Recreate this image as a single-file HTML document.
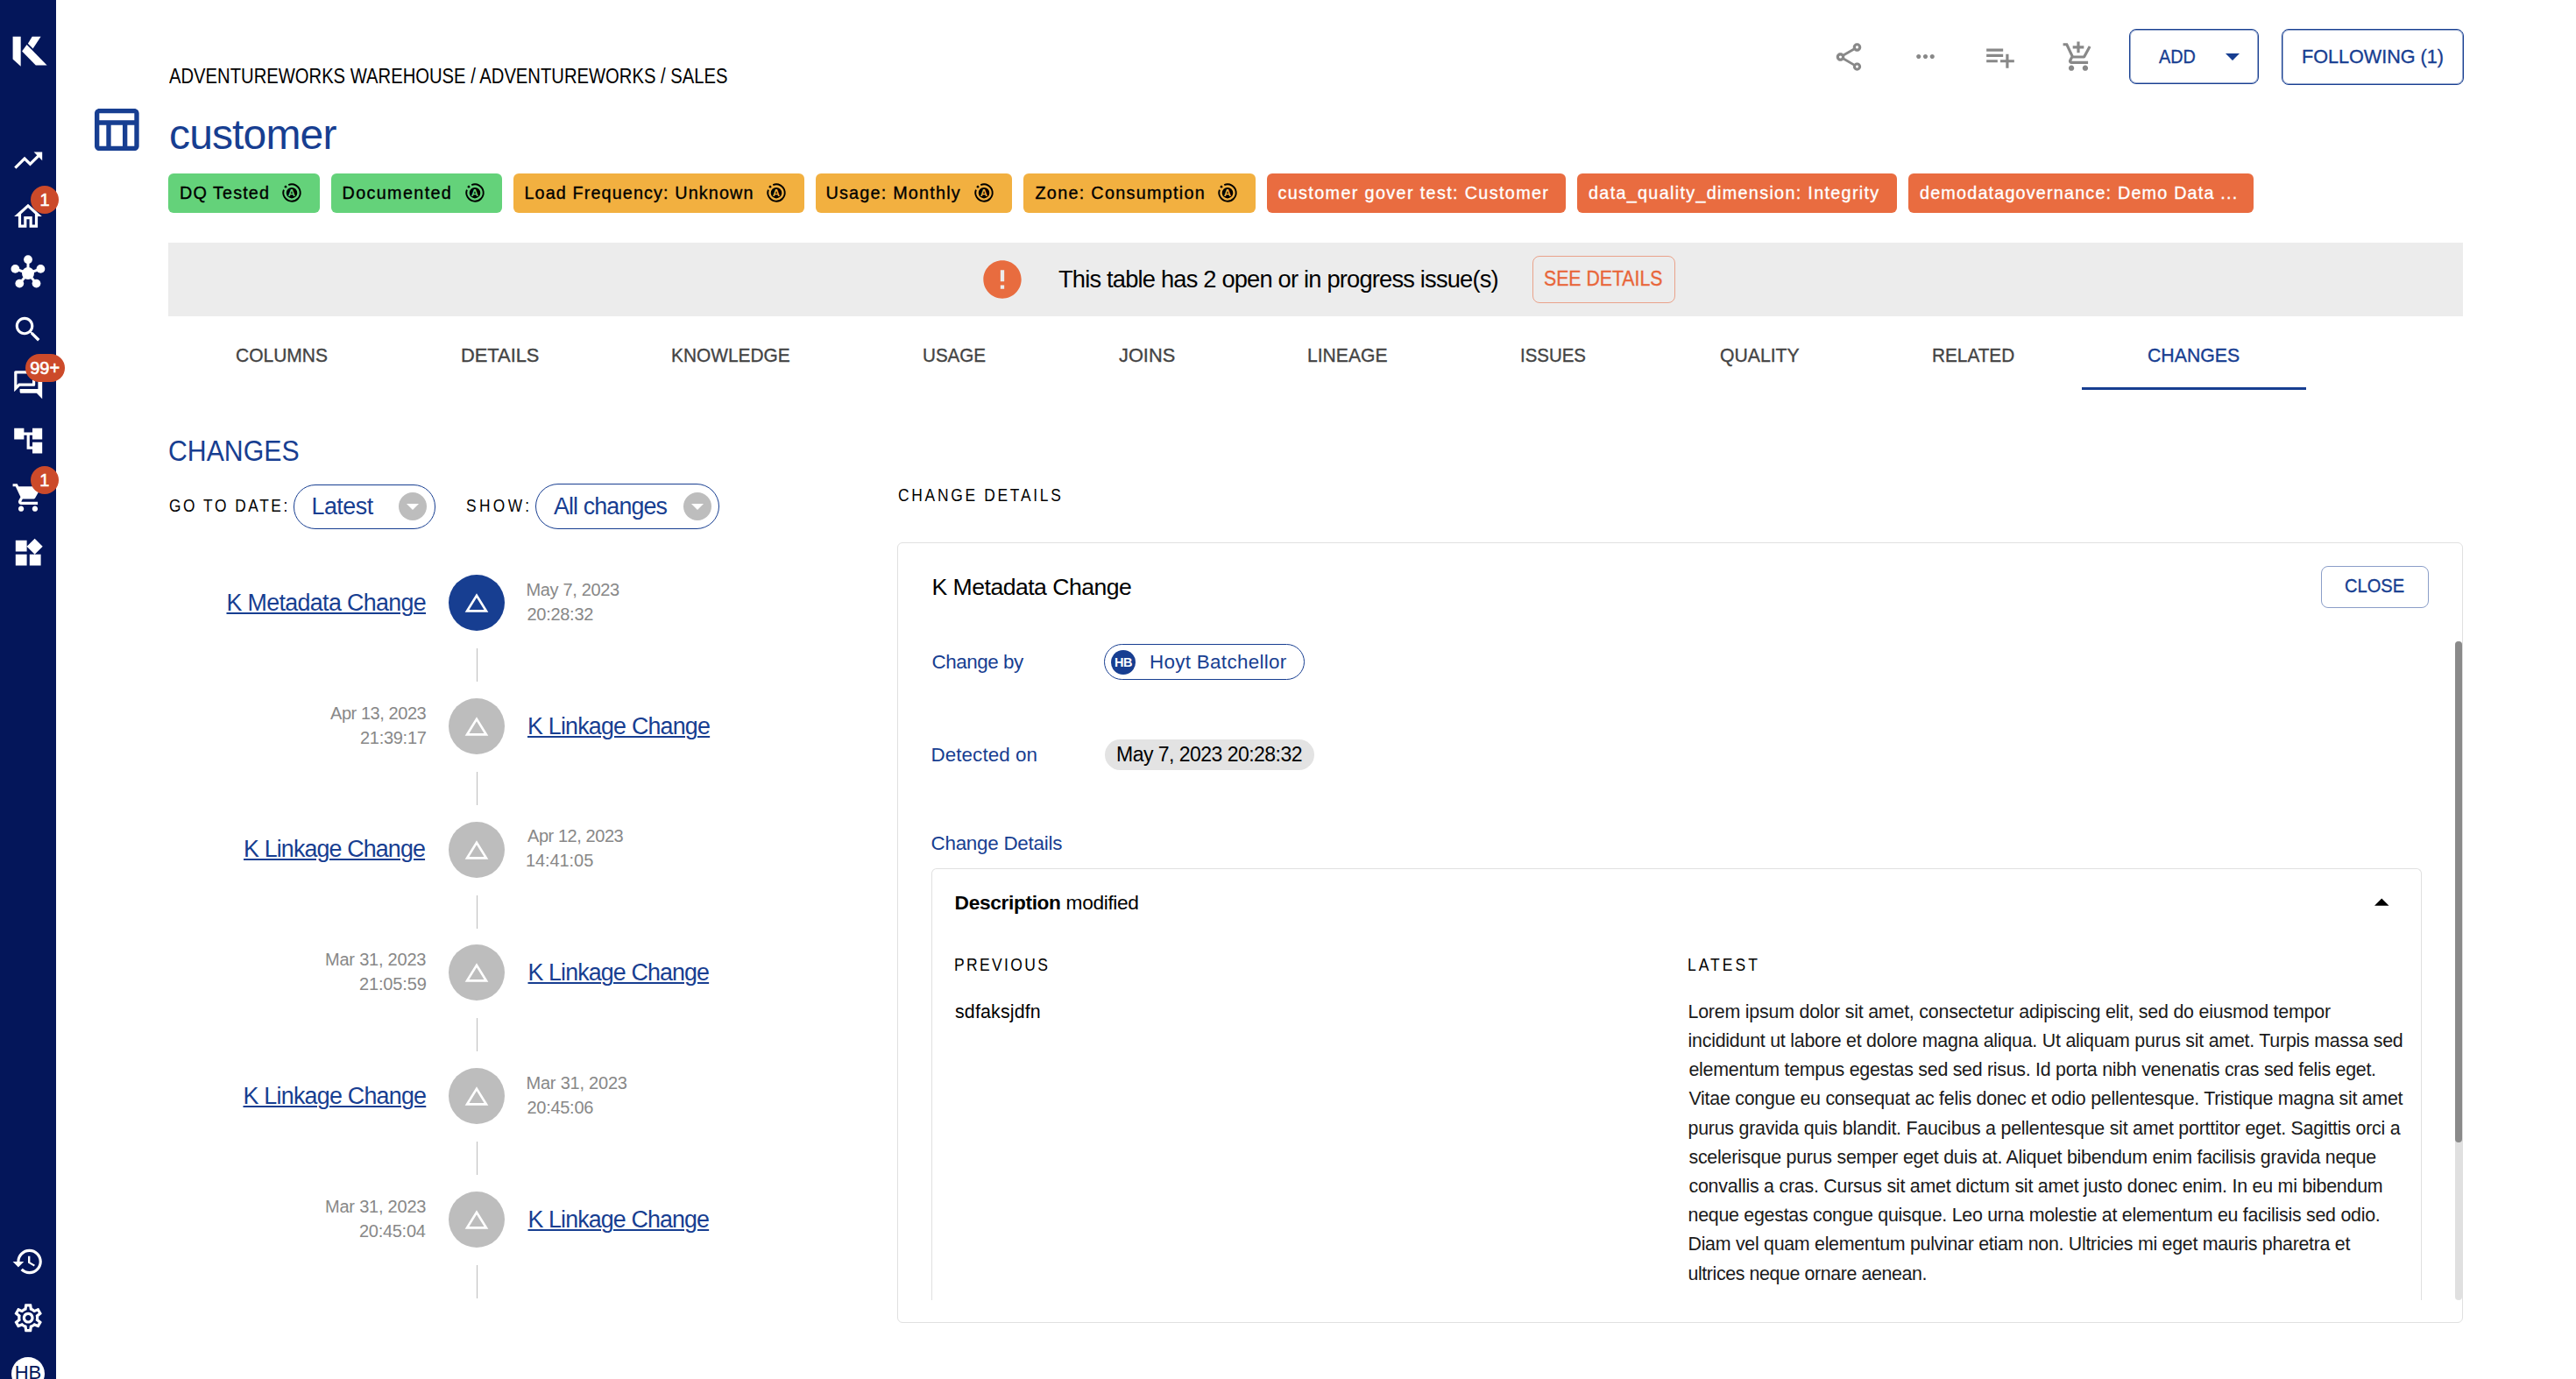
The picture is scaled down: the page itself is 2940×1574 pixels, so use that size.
<!DOCTYPE html>
<html><head><meta charset="utf-8"><title>customer</title>
<style>
html,body{margin:0;padding:0;width:2940px;height:1574px;overflow:hidden;background:#fff}
body{position:relative;font-family:"Liberation Sans",sans-serif}
.b,.t,.ic{position:absolute}
.t{white-space:nowrap}
</style></head><body>
<div class="b" style="left:0.00px;top:0.00px;width:64.00px;height:1574.00px;background:#04165a"></div>
<svg class="ic" style="left:0;top:0;width:64px;height:100px" viewBox="0 0 64 100"><g fill="#fff"><polygon points="14.6,41.8 23.7,41.8 23.7,75.7 14.6,67.6"/><polygon points="36.7,41.8 46.6,41.8 37.6,55.5 31.9,49.7"/><polygon points="30.6,51.1 53.6,74.5 40.8,74.5 25.1,58.5"/></g></svg>
<svg class="ic" style="left:13.10px;top:164.40px;width:38.40px;height:38.40px" viewBox="0 0 24 24"><path fill="#fff" d="M16 6l2.29 2.29-4.88 4.88-4-4L2 16.59 3.41 18l6-6 4 4 6.3-6.29L22 12V6z"/></svg>
<svg class="ic" style="left:13.30px;top:228.30px;width:38.00px;height:38.00px" viewBox="0 0 24 24"><path fill="#fff" d="M12 5.69l5 4.5V18h-2v-6H9v6H7v-7.81l5-4.5M12 3L2 12h3v8h6v-6h2v6h6v-8h3L12 3z"/></svg>
<svg class="ic" style="left:0;top:280px;width:64px;height:64px" viewBox="0 0 64 64"><g fill="#fff" stroke="#fff" stroke-width="3"><line x1="32" y1="32" x2="32" y2="16.2"/><line x1="32" y1="32" x2="17.4" y2="26.9"/><line x1="32" y1="32" x2="46.4" y2="26.9"/><line x1="32" y1="32" x2="22.3" y2="43.6"/><line x1="32" y1="32" x2="41.5" y2="43.6"/></g><g fill="#fff"><circle cx="32" cy="32" r="7"/><circle cx="32" cy="16.2" r="4.9"/><circle cx="17.4" cy="26.9" r="4.9"/><circle cx="46.4" cy="26.9" r="4.9"/><circle cx="22.3" cy="43.6" r="4.9"/><circle cx="41.5" cy="43.6" r="4.9"/></g></svg>
<svg class="ic" style="left:13.30px;top:356.80px;width:38.00px;height:38.00px" viewBox="0 0 24 24"><path fill="#fff" d="M15.5 14h-.79l-.28-.27C15.41 12.59 16 11.11 16 9.5 16 5.91 13.09 3 9.5 3S3 5.91 3 9.5 5.91 16 9.5 16c1.61 0 3.09-.59 4.23-1.57l.27.28v.79l5 4.99L20.49 19l-4.99-5zm-6 0C7.01 14 5 11.99 5 9.5S7.01 5 9.5 5 14 7.01 14 9.5 11.99 14 9.5 14z"/></svg>
<svg class="ic" style="left:12.50px;top:419.80px;width:38.40px;height:38.40px" viewBox="0 0 24 24"><path fill="#fff" d="M15 4v7H5.17l-.59.59-.58.58V4h11m1-2H3c-.55 0-1 .45-1 1v14l4-4h10c.55 0 1-.45 1-1V3c0-.55-.45-1-1-1zm5 4h-2v9H6v2c0 .55.45 1 1 1h11l4 4V7c0-.55-.45-1-1-1z"/></svg>
<svg class="ic" style="left:12.50px;top:483.80px;width:38.40px;height:38.40px" viewBox="0 0 24 24"><path fill="#fff" d="M22 11V3h-7v3H9V3H2v8h7V8h2v10h4v3h7v-8h-7v3h-2V8h2v3z"/></svg>
<svg class="ic" style="left:13.20px;top:548.80px;width:38.00px;height:38.00px" viewBox="0 0 24 24"><path fill="#fff" d="M7 18c-1.1 0-1.99.9-1.99 2S5.9 22 7 22s2-.9 2-2-.9-2-2-2zM1 2v2h2l3.6 7.59-1.35 2.45c-.16.28-.25.61-.25.96 0 1.1.9 2 2 2h12v-2H7.42c-.14 0-.25-.11-.25-.25l.03-.12.9-1.63h7.45c.75 0 1.41-.41 1.75-1.03l3.58-6.49c.08-.14.12-.31.12-.48 0-.55-.45-1-1-1H5.21l-.94-2H1zm16 16c-1.1 0-1.99.9-1.99 2s.89 2 1.99 2 2-.9 2-2-.9-2-2-2z"/></svg>
<svg class="ic" style="left:12.80px;top:612.30px;width:38.40px;height:38.40px" viewBox="0 0 24 24"><path fill="#fff" d="M13 13v8h8v-8h-8zM3 21h8v-8H3v8zM3 3v8h8V3H3zm13.66-1.31L11 7.34 16.66 13l5.66-5.66-5.66-5.65z"/></svg>
<svg class="ic" style="left:13.40px;top:1420.70px;width:38.00px;height:38.00px" viewBox="0 0 24 24"><path fill="#fff" d="M13 3c-4.97 0-9 4.03-9 9H1l3.89 3.89.07.14L9 12H6c0-3.87 3.13-7 7-7s7 3.13 7 7-3.13 7-7 7c-1.93 0-3.68-.79-4.94-2.06l-1.42 1.42C8.27 19.99 10.51 21 13 21c4.97 0 9-4.03 9-9s-4.03-9-9-9zm-1 5v5l4.28 2.54.72-1.21-3.5-2.08V8H12z"/></svg>
<svg class="ic" style="left:12.90px;top:1484.60px;width:38.40px;height:38.40px" viewBox="0 0 24 24"><path fill="#fff" d="M19.43 12.98c.04-.32.07-.64.07-.98 0-.34-.03-.66-.07-.98l2.11-1.65c.19-.15.24-.42.12-.64l-2-3.46c-.09-.16-.26-.25-.44-.25-.06 0-.12.01-.17.03l-2.49 1c-.52-.4-1.08-.73-1.69-.98l-.38-2.65C14.46 2.18 14.25 2 14 2h-4c-.25 0-.46.18-.49.42l-.38 2.65c-.61.25-1.17.59-1.69.98l-2.49-1c-.06-.02-.12-.03-.18-.03-.17 0-.34.09-.43.25l-2 3.46c-.13.22-.07.49.12.64l2.11 1.65c-.04.32-.07.65-.07.98 0 .33.03.66.07.98l-2.11 1.65c-.19.15-.24.42-.12.64l2 3.46c.09.16.26.25.44.25.06 0 .12-.01.17-.03l2.49-1c.52.4 1.08.73 1.69.98l.38 2.65c.03.24.24.42.49.42h4c.25 0 .46-.18.49-.42l.38-2.65c.61-.25 1.17-.59 1.69-.98l2.49 1c.06.02.12.03.18.03.17 0 .34-.09.43-.25l2-3.46c.12-.22.07-.49-.12-.64l-2.11-1.65zm-1.98-1.71c.04.31.05.52.05.73 0 .21-.02.43-.05.73l-.14 1.13.89.7 1.08.84-.7 1.21-1.27-.51-1.04-.42-.9.68c-.43.32-.84.56-1.25.73l-1.06.43-.16 1.13-.2 1.35h-1.4l-.19-1.35-.16-1.13-1.06-.43c-.43-.18-.83-.41-1.23-.71l-.91-.7-1.06.43-1.27.51-.7-1.21 1.08-.84.89-.7-.14-1.13c-.03-.31-.05-.54-.05-.74s.02-.43.05-.73l.14-1.13-.89-.7-1.08-.84.7-1.21 1.27.51 1.04.42.9-.68c.43-.32.84-.56 1.25-.73l1.06-.43.16-1.13.2-1.35h1.39l.19 1.35.16 1.13 1.06.43c.43.18.83.41 1.23.71l.91.7 1.06-.43 1.27-.51.7 1.21-1.07.85-.89.7.14 1.13zM12 8c-2.21 0-4 1.790-4 4s1.79 4 4 4 4-1.79 4-4-1.79-4-4-4zm0 6c-1.1 0-2-.9-2-2s.9-2 2-2 2 .9 2 2-.9 2-2 2z"/></svg>
<div class="b" style="left:13px;top:1548.5px;width:38px;height:38px;border-radius:50%;background:#fff"></div>
<div class="t" style="left:13px;top:1556px;width:38px;text-align:center;font-size:22px;line-height:22px;color:#04165a">HB</div>
<div class="b badge" style="left:35.00px;top:211.70px;width:32.00px;height:32px;border-radius:16px;background:#cc4a2a;color:#fff;font-size:20px;line-height:32px;text-align:center;-webkit-text-stroke:0.6px #fff">1</div>
<div class="b badge" style="left:28.60px;top:404.00px;width:45.20px;height:32px;border-radius:16px;background:#cc4a2a;color:#fff;font-size:20px;line-height:32px;text-align:center;-webkit-text-stroke:0.6px #fff">99+</div>
<div class="b badge" style="left:34.90px;top:531.90px;width:32.00px;height:32px;border-radius:16px;background:#cc4a2a;color:#fff;font-size:20px;line-height:32px;text-align:center;-webkit-text-stroke:0.6px #fff">1</div>
<svg class="ic" style="left:2091.20px;top:46.10px;width:38.00px;height:38.00px" viewBox="0 0 24 24"><path fill="#888" d="M18 16.08c-.76 0-1.44.3-1.96.77L8.91 12.7c.05-.23.09-.46.09-.7s-.04-.47-.09-.7l7.05-4.11c.54.5 1.25.81 2.04.81 1.66 0 3-1.34 3-3s-1.34-3-3-3-3 1.34-3 3c0 .24.04.47.09.7L8.04 9.81C7.5 9.31 6.79 9 6 9c-1.66 0-3 1.34-3 3s1.34 3 3 3c.79 0 1.5-.31 2.04-.81l7.12 4.16c-.05.21-.08.43-.08.65 0 1.61 1.31 2.92 2.92 2.92s2.92-1.31 2.92-2.92c0-1.61-1.31-2.92-2.92-2.92zM18 4c.55 0 1 .45 1 1s-.45 1-1 1-1-.45-1-1 .45-1 1-1zM6 13c-.55 0-1-.45-1-1s.45-1 1-1 1 .45 1 1-.45 1-1 1zm12 7.02c-.55 0-1-.45-1-1s.45-1 1-1 1 .45 1 1-.45 1-1 1z"/></svg>
<svg class="ic" style="left:2181.50px;top:48.50px;width:31.00px;height:31.00px" viewBox="0 0 24 24"><path fill="#888" d="M6 10c-1.1 0-2 .9-2 2s.9 2 2 2 2-.9 2-2-.9-2-2-2zm12 0c-1.1 0-2 .9-2 2s.9 2 2 2 2-.9 2-2-.9-2-2-2zm-6 0c-1.1 0-2 .9-2 2s.9 2 2 2 2-.9 2-2-.9-2-2-2z"/></svg>
<svg class="ic" style="left:2263.80px;top:46.00px;width:38.00px;height:38.00px" viewBox="0 0 24 24"><path fill="#888" d="M14 10H2v2h12v-2zm0-4H2v2h12V6zm4 8v-4h-2v4h-4v2h4v4h2v-4h4v-2h-4zM2 16h8v-2H2v2z"/></svg>
<svg class="ic" style="left:2353.40px;top:45.80px;width:38.00px;height:38.00px" viewBox="0 0 24 24"><path fill="#888" d="M11 9h2V6h3V4h-3V1h-2v3H8v2h3v3zm-4 9c-1.1 0-1.99.9-1.99 2S5.9 22 7 22s2-.9 2-2-.9-2-2-2zm10 0c-1.1 0-1.99.9-1.99 2s.89 2 1.99 2 2-.9 2-2-.9-2-2-2zm-9.83-3.25l.03-.12.9-1.63h7.45c.75 0 1.41-.41 1.75-1.03l3.86-7.01L19.42 4h-.01l-1.1 2-2.76 5H8.53l-.13-.27L6.16 6l-.95-2-.94-2H1v2h2l3.6 7.59-1.35 2.45c-.16.28-.25.61-.25.96 0 1.1.9 2 2 2h12v-2H7.42c-.13 0-.25-.11-.25-.25z"/></svg>
<div class="b" style="left:2430.00px;top:33.00px;width:148.00px;height:63.00px;border:1px solid #173e91;box-shadow:inset 0 0 0 1px rgba(23,62,145,0.45);border-radius:8px;box-sizing:border-box"></div>
<svg class="ic" style="left:2540px;top:60.8px;width:16px;height:8.1px" viewBox="0 0 10 5"><path fill="#173e91" d="M0 0l5 5 5-5z"/></svg>
<div class="b" style="left:2604.00px;top:33.00px;width:208.00px;height:63.50px;border:1px solid #173e91;box-shadow:inset 0 0 0 1px rgba(23,62,145,0.45);border-radius:8px;box-sizing:border-box"></div>
<svg class="ic" style="left:100.00px;top:116.00px;width:64.00px;height:64.00px" viewBox="0 0 24 24"><path fill="#173e91" d="M20 3H5c-1.1 0-2 .9-2 2v14c0 1.1.9 2 2 2h15c1.1 0 2-.9 2-2V5c0-1.1-.9-2-2-2zm0 2v3H5V5h15zm-5 14h-5v-9h5v9zM5 10h3v9H5v-9zm12 9v-9h3v9h-3z"/></svg>
<div class="b" style="left:192.00px;top:198.00px;width:173.00px;height:44.50px;background:#64d27a;border-radius:6px"></div>
<svg class="ic" style="left:321.30px;top:208.00px;width:24px;height:24px" viewBox="0 0 24 24"><path d="M8.26 3.05 A9.7 9.7 0 1 1 2.91 8.6" fill="none" stroke="#000" stroke-width="1.9"/><circle cx="5" cy="5.2" r="1.35" fill="#000"/><circle cx="12" cy="12.2" r="6.2" fill="#000"/><text x="12" y="16.3" text-anchor="middle" font-size="11.5" font-weight="700" fill="#64d27a" font-family="Liberation Sans">A</text></svg>
<div class="b" style="left:378.20px;top:198.00px;width:194.70px;height:44.50px;background:#64d27a;border-radius:6px"></div>
<svg class="ic" style="left:529.60px;top:208.00px;width:24px;height:24px" viewBox="0 0 24 24"><path d="M8.26 3.05 A9.7 9.7 0 1 1 2.91 8.6" fill="none" stroke="#000" stroke-width="1.9"/><circle cx="5" cy="5.2" r="1.35" fill="#000"/><circle cx="12" cy="12.2" r="6.2" fill="#000"/><text x="12" y="16.3" text-anchor="middle" font-size="11.5" font-weight="700" fill="#64d27a" font-family="Liberation Sans">A</text></svg>
<div class="b" style="left:586.20px;top:198.00px;width:331.70px;height:44.50px;background:#f2b040;border-radius:6px"></div>
<svg class="ic" style="left:873.70px;top:208.00px;width:24px;height:24px" viewBox="0 0 24 24"><path d="M8.26 3.05 A9.7 9.7 0 1 1 2.91 8.6" fill="none" stroke="#000" stroke-width="1.9"/><circle cx="5" cy="5.2" r="1.35" fill="#000"/><circle cx="12" cy="12.2" r="6.2" fill="#000"/><text x="12" y="16.3" text-anchor="middle" font-size="11.5" font-weight="700" fill="#f2b040" font-family="Liberation Sans">A</text></svg>
<div class="b" style="left:931.10px;top:198.00px;width:223.70px;height:44.50px;background:#f2b040;border-radius:6px"></div>
<svg class="ic" style="left:1111.30px;top:208.00px;width:24px;height:24px" viewBox="0 0 24 24"><path d="M8.26 3.05 A9.7 9.7 0 1 1 2.91 8.6" fill="none" stroke="#000" stroke-width="1.9"/><circle cx="5" cy="5.2" r="1.35" fill="#000"/><circle cx="12" cy="12.2" r="6.2" fill="#000"/><text x="12" y="16.3" text-anchor="middle" font-size="11.5" font-weight="700" fill="#f2b040" font-family="Liberation Sans">A</text></svg>
<div class="b" style="left:1168.10px;top:198.00px;width:264.70px;height:44.50px;background:#f2b040;border-radius:6px"></div>
<svg class="ic" style="left:1388.70px;top:208.00px;width:24px;height:24px" viewBox="0 0 24 24"><path d="M8.26 3.05 A9.7 9.7 0 1 1 2.91 8.6" fill="none" stroke="#000" stroke-width="1.9"/><circle cx="5" cy="5.2" r="1.35" fill="#000"/><circle cx="12" cy="12.2" r="6.2" fill="#000"/><text x="12" y="16.3" text-anchor="middle" font-size="11.5" font-weight="700" fill="#f2b040" font-family="Liberation Sans">A</text></svg>
<div class="b" style="left:1446.20px;top:198.00px;width:340.50px;height:44.50px;background:#e96c40;border-radius:6px"></div>
<div class="b" style="left:1800.00px;top:198.00px;width:364.80px;height:44.50px;background:#e96c40;border-radius:6px"></div>
<div class="b" style="left:2178.30px;top:198.00px;width:394.20px;height:44.50px;background:#e96c40;border-radius:6px"></div>
<div class="b" style="left:192.00px;top:277.00px;width:2618.50px;height:84.00px;background:#ececec"></div>
<svg class="ic" style="left:1117.50px;top:292.80px;width:52.00px;height:52.00px" viewBox="0 0 24 24"><path fill="#e86c3f" d="M12 2C6.48 2 2 6.48 2 12s4.48 10 10 10 10-4.48 10-10S17.52 2 12 2zm1 15h-2v-2h2v2zm0-4h-2V7h2v6z"/></svg>
<div class="b" style="left:1749.00px;top:292.00px;width:163.00px;height:54.00px;border:1.5px solid rgba(232,102,58,0.55);border-radius:8px;box-sizing:border-box"></div>
<div class="b" style="left:2376.00px;top:442.00px;width:256.00px;height:3.00px;background:#173e91"></div>
<div class="b" style="left:335.00px;top:553.00px;width:162.00px;height:51.00px;border:1.5px solid #173e91;border-radius:25px;box-sizing:border-box"></div><div class="b" style="left:455.00px;top:562.40px;width:32.00px;height:32.00px;background:#bdbdbd;border-radius:50%"></div><svg class="ic" style="left:464.00px;top:574.90px;width:14px;height:7px" viewBox="0 0 10 5"><path fill="#fff" d="M0 0l5 5 5-5z"/></svg>
<div class="b" style="left:611.00px;top:552.30px;width:210.00px;height:52.00px;border:1.5px solid #173e91;border-radius:26px;box-sizing:border-box"></div><div class="b" style="left:779.80px;top:562.40px;width:32.00px;height:32.00px;background:#bdbdbd;border-radius:50%"></div><svg class="ic" style="left:788.80px;top:574.90px;width:14px;height:7px" viewBox="0 0 10 5"><path fill="#fff" d="M0 0l5 5 5-5z"/></svg>
<div class="b" style="left:512.10px;top:655.80px;width:64.00px;height:64.00px;background:#173e91;border-radius:50%"></div>
<svg class="ic" style="left:528.10px;top:671.80px;width:32.00px;height:32.00px" viewBox="0 0 24 24"><path fill="#fff" d="M12 7.77L18.39 18H5.61L12 7.77M12 4L2 20h20L12 4z"/></svg>
<div class="b" style="left:544.00px;top:739.80px;width:1.00px;height:38.00px;background:#bdbdbd"></div>
<div class="b" style="left:512.10px;top:796.65px;width:64.00px;height:64.00px;background:#bdbdbd;border-radius:50%"></div>
<svg class="ic" style="left:528.10px;top:812.65px;width:32.00px;height:32.00px" viewBox="0 0 24 24"><path fill="#fff" d="M12 7.77L18.39 18H5.61L12 7.77M12 4L2 20h20L12 4z"/></svg>
<div class="b" style="left:544.00px;top:880.65px;width:1.00px;height:38.00px;background:#bdbdbd"></div>
<div class="b" style="left:512.10px;top:937.50px;width:64.00px;height:64.00px;background:#bdbdbd;border-radius:50%"></div>
<svg class="ic" style="left:528.10px;top:953.50px;width:32.00px;height:32.00px" viewBox="0 0 24 24"><path fill="#fff" d="M12 7.77L18.39 18H5.61L12 7.77M12 4L2 20h20L12 4z"/></svg>
<div class="b" style="left:544.00px;top:1021.50px;width:1.00px;height:38.00px;background:#bdbdbd"></div>
<div class="b" style="left:512.10px;top:1078.35px;width:64.00px;height:64.00px;background:#bdbdbd;border-radius:50%"></div>
<svg class="ic" style="left:528.10px;top:1094.35px;width:32.00px;height:32.00px" viewBox="0 0 24 24"><path fill="#fff" d="M12 7.77L18.39 18H5.61L12 7.77M12 4L2 20h20L12 4z"/></svg>
<div class="b" style="left:544.00px;top:1162.35px;width:1.00px;height:38.00px;background:#bdbdbd"></div>
<div class="b" style="left:512.10px;top:1219.20px;width:64.00px;height:64.00px;background:#bdbdbd;border-radius:50%"></div>
<svg class="ic" style="left:528.10px;top:1235.20px;width:32.00px;height:32.00px" viewBox="0 0 24 24"><path fill="#fff" d="M12 7.77L18.39 18H5.61L12 7.77M12 4L2 20h20L12 4z"/></svg>
<div class="b" style="left:544.00px;top:1303.20px;width:1.00px;height:38.00px;background:#bdbdbd"></div>
<div class="b" style="left:512.10px;top:1360.05px;width:64.00px;height:64.00px;background:#bdbdbd;border-radius:50%"></div>
<svg class="ic" style="left:528.10px;top:1376.05px;width:32.00px;height:32.00px" viewBox="0 0 24 24"><path fill="#fff" d="M12 7.77L18.39 18H5.61L12 7.77M12 4L2 20h20L12 4z"/></svg>
<div class="b" style="left:544.00px;top:1444.05px;width:1.00px;height:38.00px;background:#bdbdbd"></div>
<div class="b" style="left:1024.00px;top:619.00px;width:1787.00px;height:891.00px;border:1px solid #e0e0e0;border-radius:6px;box-sizing:border-box"></div>
<div class="b" style="left:2649.00px;top:646.00px;width:123.00px;height:48.00px;border:1.5px solid rgba(23,62,145,0.5);border-radius:8px;box-sizing:border-box"></div>
<div class="b" style="left:2801.50px;top:732.00px;width:8.50px;height:751.50px;background:#e0e0e0;border-radius:4px"></div>
<div class="b" style="left:2802.00px;top:732.00px;width:8.00px;height:572.00px;background:#8a8a8a;border-radius:4px"></div>
<div class="b" style="left:1260.00px;top:735.20px;width:229.00px;height:40.50px;border:1.5px solid #173e91;border-radius:21px;box-sizing:border-box"></div>
<div class="b" style="left:1268.00px;top:741.50px;width:28.00px;height:28.00px;background:#173e91;border-radius:50%"></div>
<div class="t" style="left:1268px;top:748.5px;width:28px;text-align:center;font-size:14.5px;line-height:14.5px;color:#fff;font-weight:700;letter-spacing:-0.5px">HB</div>
<div class="b" style="left:1261.00px;top:844.10px;width:238.60px;height:35.40px;background:#e3e3e3;border-radius:18px"></div>
<div class="b" style="left:1063px;top:991px;width:1701px;height:493px;border:1px solid #e0e0e0;border-bottom:none;border-radius:6px 6px 0 0;box-sizing:border-box"></div>
<svg class="ic" style="left:2710px;top:1024.8px;width:16.5px;height:9px" viewBox="0 0 10 5"><path fill="#000" d="M0 5l5-5 5 5z"/></svg>
<div class="t" id="t_bc" style="left:192.50px;top:76.00px;font-size:23.30px;line-height:23.30px;color:#000;letter-spacing:0.000px;transform:scaleX(0.8680);transform-origin:0 0;">ADVENTUREWORKS WAREHOUSE / ADVENTUREWORKS / SALES</div>
<div class="t" id="t_title" style="left:193.00px;top:130.00px;font-size:48.00px;line-height:48.00px;color:#173e91;letter-spacing:-0.857px;">customer</div>
<div class="t" id="t_tag0" style="left:205.00px;top:211.00px;font-size:19.80px;line-height:19.80px;color:#000;letter-spacing:1.100px;-webkit-text-stroke:0.35px currentColor;">DQ Tested</div>
<div class="t" id="t_tag1" style="left:390.50px;top:211.00px;font-size:19.80px;line-height:19.80px;color:#000;letter-spacing:1.356px;-webkit-text-stroke:0.35px currentColor;">Documented</div>
<div class="t" id="t_tag2" style="left:598.50px;top:211.00px;font-size:19.80px;line-height:19.80px;color:#000;letter-spacing:1.118px;-webkit-text-stroke:0.35px currentColor;">Load Frequency: Unknown</div>
<div class="t" id="t_tag3" style="left:942.50px;top:211.00px;font-size:19.80px;line-height:19.80px;color:#000;letter-spacing:1.215px;-webkit-text-stroke:0.35px currentColor;">Usage: Monthly</div>
<div class="t" id="t_tag4" style="left:1181.50px;top:211.00px;font-size:19.80px;line-height:19.80px;color:#000;letter-spacing:1.288px;-webkit-text-stroke:0.35px currentColor;">Zone: Consumption</div>
<div class="t" id="t_tag5" style="left:1458.50px;top:211.00px;font-size:19.80px;line-height:19.80px;color:#fff;letter-spacing:1.357px;-webkit-text-stroke:0.35px currentColor;">customer gover test: Customer</div>
<div class="t" id="t_tag6" style="left:1813.00px;top:211.00px;font-size:19.80px;line-height:19.80px;color:#fff;letter-spacing:1.312px;-webkit-text-stroke:0.35px currentColor;">data_quality_dimension: Integrity</div>
<div class="t" id="t_tag7" style="left:2191.00px;top:211.00px;font-size:19.80px;line-height:19.80px;color:#fff;letter-spacing:1.181px;-webkit-text-stroke:0.35px currentColor;">demodatagovernance: Demo Data ...</div>
<div class="t" id="t_banner" style="left:1208.00px;top:305.00px;font-size:27.30px;line-height:27.30px;color:#000;letter-spacing:-0.818px;">This table has 2 open or in progress issue(s)</div>
<div class="t" id="t_seedet" style="left:1762.00px;top:307.00px;font-size:23.00px;line-height:23.00px;color:#e8663a;letter-spacing:0.000px;transform:scaleX(0.9239);transform-origin:0 0;-webkit-text-stroke:0.35px currentColor;">SEE DETAILS</div>
<div class="t" id="t_add" style="left:2464.00px;top:53.00px;font-size:22.70px;line-height:22.70px;color:#173e91;letter-spacing:0.000px;transform:scaleX(0.8748);transform-origin:0 0;-webkit-text-stroke:0.35px currentColor;">ADD</div>
<div class="t" id="t_follow" style="left:2627.00px;top:53.00px;font-size:22.70px;line-height:22.70px;color:#173e91;letter-spacing:0.000px;transform:scaleX(0.9519);transform-origin:0 0;-webkit-text-stroke:0.35px currentColor;">FOLLOWING (1)</div>
<div class="t" id="t_tab0" style="left:268.80px;top:394.00px;font-size:22.70px;line-height:22.70px;color:#444;letter-spacing:0.000px;transform:scaleX(0.9258);transform-origin:0 0;-webkit-text-stroke:0.35px currentColor;">COLUMNS</div>
<div class="t" id="t_tab1" style="left:525.50px;top:394.00px;font-size:22.70px;line-height:22.70px;color:#444;letter-spacing:0.000px;transform:scaleX(0.9627);transform-origin:0 0;-webkit-text-stroke:0.35px currentColor;">DETAILS</div>
<div class="t" id="t_tab2" style="left:765.50px;top:394.00px;font-size:22.70px;line-height:22.70px;color:#444;letter-spacing:0.000px;transform:scaleX(0.9193);transform-origin:0 0;-webkit-text-stroke:0.35px currentColor;">KNOWLEDGE</div>
<div class="t" id="t_tab3" style="left:1052.50px;top:394.00px;font-size:22.70px;line-height:22.70px;color:#444;letter-spacing:0.000px;transform:scaleX(0.9079);transform-origin:0 0;-webkit-text-stroke:0.35px currentColor;">USAGE</div>
<div class="t" id="t_tab4" style="left:1276.50px;top:394.00px;font-size:22.70px;line-height:22.70px;color:#444;letter-spacing:0.000px;transform:scaleX(0.9607);transform-origin:0 0;-webkit-text-stroke:0.35px currentColor;">JOINS</div>
<div class="t" id="t_tab5" style="left:1492.10px;top:394.00px;font-size:22.70px;line-height:22.70px;color:#444;letter-spacing:0.000px;transform:scaleX(0.9300);transform-origin:0 0;-webkit-text-stroke:0.35px currentColor;">LINEAGE</div>
<div class="t" id="t_tab6" style="left:1735.10px;top:394.00px;font-size:22.70px;line-height:22.70px;color:#444;letter-spacing:0.000px;transform:scaleX(0.9013);transform-origin:0 0;-webkit-text-stroke:0.35px currentColor;">ISSUES</div>
<div class="t" id="t_tab7" style="left:1962.80px;top:394.00px;font-size:22.70px;line-height:22.70px;color:#444;letter-spacing:0.000px;transform:scaleX(0.9337);transform-origin:0 0;-webkit-text-stroke:0.35px currentColor;">QUALITY</div>
<div class="t" id="t_tab8" style="left:2204.70px;top:394.00px;font-size:22.70px;line-height:22.70px;color:#444;letter-spacing:0.000px;transform:scaleX(0.9149);transform-origin:0 0;-webkit-text-stroke:0.35px currentColor;">RELATED</div>
<div class="t" id="t_tab9" style="left:2451.10px;top:394.00px;font-size:22.70px;line-height:22.70px;color:#173e91;letter-spacing:0.000px;transform:scaleX(0.9371);transform-origin:0 0;-webkit-text-stroke:0.35px currentColor;">CHANGES</div>
<div class="t" id="t_chh" style="left:192.00px;top:498.00px;font-size:33.10px;line-height:33.10px;color:#173e91;letter-spacing:0.000px;transform:scaleX(0.9144);transform-origin:0 0;">CHANGES</div>
<div class="t" id="t_gotodate" style="left:193.00px;top:568.00px;font-size:19.70px;line-height:19.70px;color:#000;letter-spacing:2.898px;transform:scaleX(0.8800);transform-origin:0 0;">GO TO DATE:</div>
<div class="t" id="t_latest" style="left:355.50px;top:565.00px;font-size:26.80px;line-height:26.80px;color:#173e91;letter-spacing:-0.480px;">Latest</div>
<div class="t" id="t_show" style="left:531.50px;top:568.00px;font-size:19.70px;line-height:19.70px;color:#000;letter-spacing:3.857px;transform:scaleX(0.8800);transform-origin:0 0;">SHOW:</div>
<div class="t" id="t_allch" style="left:632.00px;top:565.00px;font-size:26.80px;line-height:26.80px;color:#173e91;letter-spacing:-0.860px;">All changes</div>
<div class="t" id="t_lnk0" style="left:258.50px;top:675.00px;font-size:26.80px;line-height:26.80px;color:#173e91;letter-spacing:-0.637px;text-decoration:underline;text-decoration-thickness:2px;text-underline-offset:2px;">K Metadata Change</div>
<div class="t" id="t_d1_0" style="left:600.50px;top:663.00px;font-size:20.00px;line-height:20.00px;color:#888;letter-spacing:-0.340px;">May 7, 2023</div>
<div class="t" id="t_d2_0" style="left:601.50px;top:691.00px;font-size:20.00px;line-height:20.00px;color:#888;letter-spacing:-0.286px;">20:28:32</div>
<div class="t" id="t_lnk1" style="left:602.00px;top:816.00px;font-size:26.80px;line-height:26.80px;color:#173e91;letter-spacing:-0.773px;text-decoration:underline;text-decoration-thickness:2px;text-underline-offset:2px;">K Linkage Change</div>
<div class="t" id="t_d1_1" style="left:377.00px;top:804.00px;font-size:20.00px;line-height:20.00px;color:#888;letter-spacing:-0.436px;">Apr 13, 2023</div>
<div class="t" id="t_d2_1" style="left:411.00px;top:832.00px;font-size:20.00px;line-height:20.00px;color:#888;letter-spacing:-0.286px;">21:39:17</div>
<div class="t" id="t_lnk2" style="left:278.00px;top:956.00px;font-size:26.80px;line-height:26.80px;color:#173e91;letter-spacing:-0.840px;text-decoration:underline;text-decoration-thickness:2px;text-underline-offset:2px;">K Linkage Change</div>
<div class="t" id="t_d1_2" style="left:602.00px;top:944.00px;font-size:20.00px;line-height:20.00px;color:#888;letter-spacing:-0.436px;">Apr 12, 2023</div>
<div class="t" id="t_d2_2" style="left:600.00px;top:972.00px;font-size:20.00px;line-height:20.00px;color:#888;letter-spacing:-0.086px;">14:41:05</div>
<div class="t" id="t_lnk3" style="left:602.50px;top:1097.00px;font-size:26.80px;line-height:26.80px;color:#173e91;letter-spacing:-0.867px;text-decoration:underline;text-decoration-thickness:2px;text-underline-offset:2px;">K Linkage Change</div>
<div class="t" id="t_d1_3" style="left:371.00px;top:1085.00px;font-size:20.00px;line-height:20.00px;color:#888;letter-spacing:-0.218px;">Mar 31, 2023</div>
<div class="t" id="t_d2_3" style="left:410.00px;top:1113.00px;font-size:20.00px;line-height:20.00px;color:#888;letter-spacing:-0.143px;">21:05:59</div>
<div class="t" id="t_lnk4" style="left:277.50px;top:1238.00px;font-size:26.80px;line-height:26.80px;color:#173e91;letter-spacing:-0.733px;text-decoration:underline;text-decoration-thickness:2px;text-underline-offset:2px;">K Linkage Change</div>
<div class="t" id="t_d1_4" style="left:600.50px;top:1226.00px;font-size:20.00px;line-height:20.00px;color:#888;letter-spacing:-0.218px;">Mar 31, 2023</div>
<div class="t" id="t_d2_4" style="left:601.50px;top:1254.00px;font-size:20.00px;line-height:20.00px;color:#888;letter-spacing:-0.286px;">20:45:06</div>
<div class="t" id="t_lnk5" style="left:602.50px;top:1379.00px;font-size:26.80px;line-height:26.80px;color:#173e91;letter-spacing:-0.867px;text-decoration:underline;text-decoration-thickness:2px;text-underline-offset:2px;">K Linkage Change</div>
<div class="t" id="t_d1_5" style="left:371.00px;top:1367.00px;font-size:20.00px;line-height:20.00px;color:#888;letter-spacing:-0.218px;">Mar 31, 2023</div>
<div class="t" id="t_d2_5" style="left:410.00px;top:1395.00px;font-size:20.00px;line-height:20.00px;color:#888;letter-spacing:-0.286px;">20:45:04</div>
<div class="t" id="t_cdlabel" style="left:1024.50px;top:556.00px;font-size:19.80px;line-height:19.80px;color:#000;letter-spacing:3.077px;transform:scaleX(0.8800);transform-origin:0 0;">CHANGE DETAILS</div>
<div class="t" id="t_cardh" style="left:1063.50px;top:657.00px;font-size:26.60px;line-height:26.60px;color:#000;letter-spacing:-0.512px;">K Metadata Change</div>
<div class="t" id="t_close" style="left:2675.50px;top:657.00px;font-size:22.80px;line-height:22.80px;color:#173e91;letter-spacing:0.000px;transform:scaleX(0.8817);transform-origin:0 0;-webkit-text-stroke:0.35px currentColor;">CLOSE</div>
<div class="t" id="t_chby" style="left:1063.50px;top:745.00px;font-size:22.40px;line-height:22.40px;color:#173e91;letter-spacing:-0.450px;">Change by</div>
<div class="t" id="t_hoyt" style="left:1312.00px;top:745.00px;font-size:22.40px;line-height:22.40px;color:#173e91;letter-spacing:0.314px;">Hoyt Batchellor</div>
<div class="t" id="t_deton" style="left:1062.50px;top:851.00px;font-size:22.40px;line-height:22.40px;color:#173e91;letter-spacing:0.080px;">Detected on</div>
<div class="t" id="t_datechip" style="left:1274.00px;top:850.00px;font-size:23.00px;line-height:23.00px;color:#000;letter-spacing:-0.526px;">May 7, 2023 20:28:32</div>
<div class="t" id="t_chdet" style="left:1062.50px;top:952.00px;font-size:22.40px;line-height:22.40px;color:#173e91;letter-spacing:-0.246px;">Change Details</div>
<div class="t" id="t_prev" style="left:1089.00px;top:1092.00px;font-size:19.90px;line-height:19.90px;color:#000;letter-spacing:2.662px;transform:scaleX(0.8800);transform-origin:0 0;">PREVIOUS</div>
<div class="t" id="t_latesth" style="left:1926.00px;top:1092.00px;font-size:19.90px;line-height:19.90px;color:#000;letter-spacing:3.405px;transform:scaleX(0.8800);transform-origin:0 0;">LATEST</div>
<div class="t" id="t_sdf" style="left:1090.00px;top:1145.00px;font-size:21.40px;line-height:21.40px;color:#000;letter-spacing:0.156px;">sdfaksjdfn</div>
<div class="t" id="t_descmod" style="left:1089.60px;top:1019.00px;font-size:22.70px;line-height:22.70px;color:#000;letter-spacing:-0.342px;"><b>Description</b> modified</div>
<div class="t" id="t_lor0" style="left:1926.50px;top:1145.00px;font-size:21.40px;line-height:21.40px;color:#1a1a1a;letter-spacing:-0.216px;">Lorem ipsum dolor sit amet, consectetur adipiscing elit, sed do eiusmod tempor</div>
<div class="t" id="t_lor1" style="left:1926.50px;top:1178.00px;font-size:21.40px;line-height:21.40px;color:#1a1a1a;letter-spacing:-0.239px;">incididunt ut labore et dolore magna aliqua. Ut aliquam purus sit amet. Turpis massa sed</div>
<div class="t" id="t_lor2" style="left:1927.50px;top:1211.00px;font-size:21.40px;line-height:21.40px;color:#1a1a1a;letter-spacing:-0.275px;">elementum tempus egestas sed sed risus. Id porta nibh venenatis cras sed felis eget.</div>
<div class="t" id="t_lor3" style="left:1927.50px;top:1244.00px;font-size:21.40px;line-height:21.40px;color:#1a1a1a;letter-spacing:-0.267px;">Vitae congue eu consequat ac felis donec et odio pellentesque. Tristique magna sit amet</div>
<div class="t" id="t_lor4" style="left:1926.50px;top:1278.00px;font-size:21.40px;line-height:21.40px;color:#1a1a1a;letter-spacing:-0.237px;">purus gravida quis blandit. Faucibus a pellentesque sit amet porttitor eget. Sagittis orci a</div>
<div class="t" id="t_lor5" style="left:1927.50px;top:1311.00px;font-size:21.40px;line-height:21.40px;color:#1a1a1a;letter-spacing:-0.258px;">scelerisque purus semper eget duis at. Aliquet bibendum enim facilisis gravida neque</div>
<div class="t" id="t_lor6" style="left:1927.50px;top:1344.00px;font-size:21.40px;line-height:21.40px;color:#1a1a1a;letter-spacing:-0.236px;">convallis a cras. Cursus sit amet dictum sit amet justo donec enim. In eu mi bibendum</div>
<div class="t" id="t_lor7" style="left:1926.50px;top:1377.00px;font-size:21.40px;line-height:21.40px;color:#1a1a1a;letter-spacing:-0.268px;">neque egestas congue quisque. Leo urna molestie at elementum eu facilisis sed odio.</div>
<div class="t" id="t_lor8" style="left:1926.50px;top:1410.00px;font-size:21.40px;line-height:21.40px;color:#1a1a1a;letter-spacing:-0.289px;">Diam vel quam elementum pulvinar etiam non. Ultricies mi eget mauris pharetra et</div>
<div class="t" id="t_lor9" style="left:1926.50px;top:1444.00px;font-size:21.40px;line-height:21.40px;color:#1a1a1a;letter-spacing:-0.407px;">ultrices neque ornare aenean.</div>
</body></html>
